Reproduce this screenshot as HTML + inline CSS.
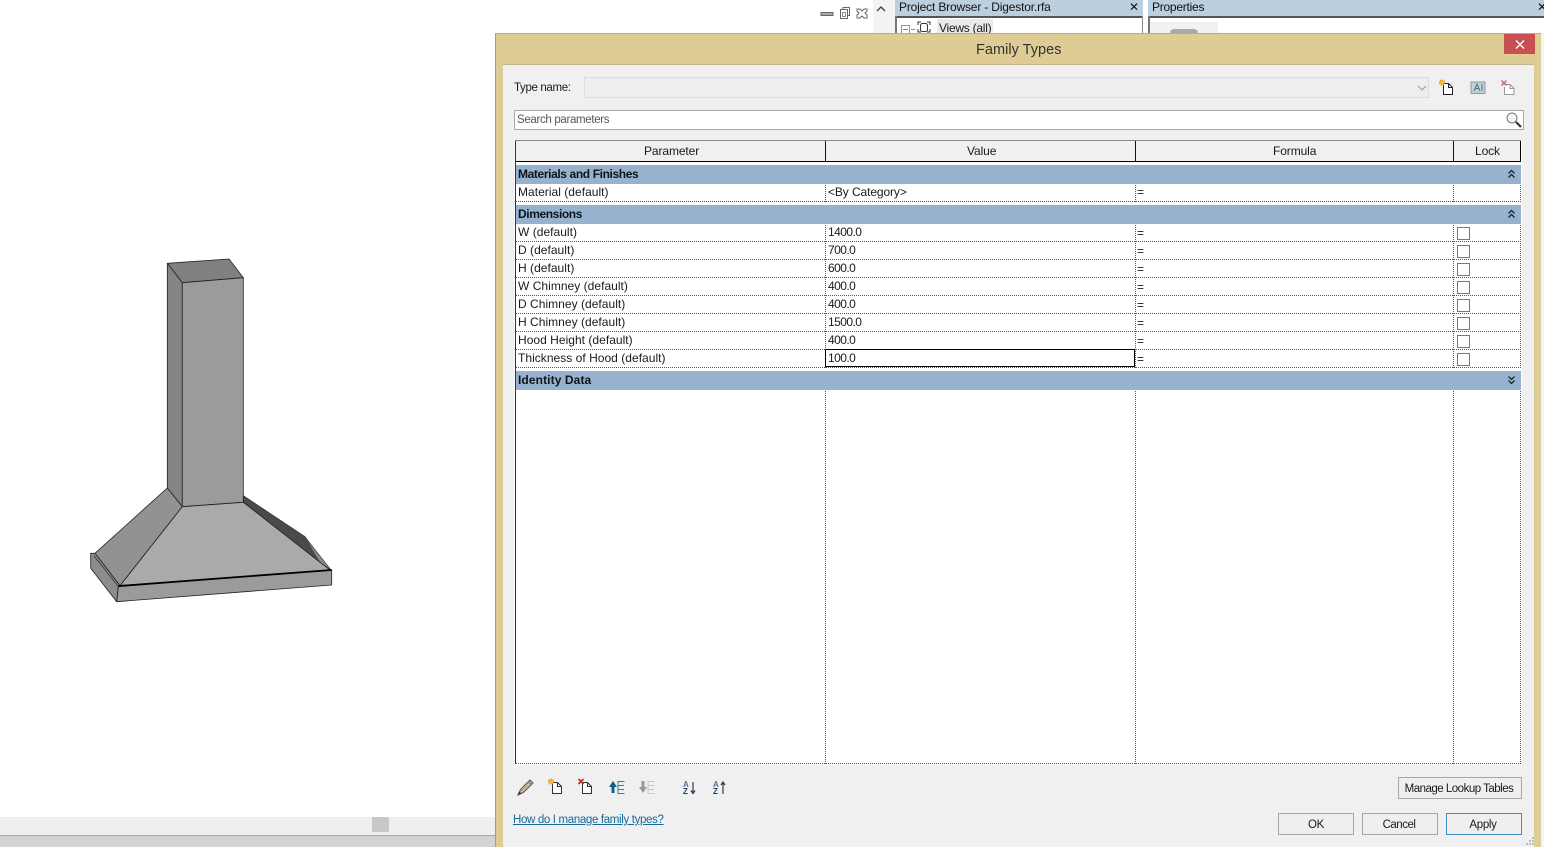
<!DOCTYPE html>
<html><head><meta charset="utf-8"><style>
html,body{margin:0;padding:0;background:#fff}
#p{position:relative;width:1544px;height:847px;overflow:hidden;background:#fff;font-family:"Liberation Sans",sans-serif;font-size:12px;color:#1a1a1a}
#p div{position:absolute}
.t{white-space:nowrap;line-height:16px;height:16px;letter-spacing:.03px}
.n{letter-spacing:-.55px}
.sec{left:516px;width:1005px;height:19px;background:#96b2cf}
.sec b{position:absolute;left:2px;top:1px;line-height:16px;font-size:12px;color:#10141a;white-space:nowrap}
.dh{left:516px;width:1005px;height:1px;background-image:repeating-linear-gradient(90deg,#555 0 1px,transparent 1px 2px)}
.dv{width:1px;background-image:repeating-linear-gradient(0deg,#555 0 1px,transparent 1px 2px)}
.cb{left:1457px;width:11px;height:11px;border:1px solid #777;background:#fff}
.btn{background:#efefef;border:1px solid #a8a8a8;text-align:center;line-height:22px;height:20px;font-size:11.5px;letter-spacing:-.3px;white-space:nowrap}
svg{position:absolute;overflow:visible}
</style></head><body><div id="p">

<svg style="left:0;top:0" width="495" height="847" stroke="#222" stroke-width=".8" stroke-linejoin="round">
<polygon points="243.3,495.7 243.3,502.3 330,570 305,536.7" fill="#4a4a4a" stroke="#333"/>
<polygon points="304,536 331,570 320,563" fill="#8c8c8c" stroke="#444"/>
<polygon points="167.3,263.3 229,259 243.3,277.7 182.3,282.7" fill="#808080"/>
<polygon points="167.3,263.3 182.3,282.7 182.3,506.7 167.3,488" fill="#858585"/>
<polygon points="182.3,282.7 243.3,277.7 243.3,502.3 182.3,506.7" fill="#9b9b9b"/>
<polygon points="167.3,488 182.3,506.7 120,585.7 95,553.3" fill="#929292"/>
<polygon points="182.3,506.7 243.3,502.3 330,570 120,585.7" fill="#aaa"/>
<polygon points="90.7,553.3 95,553.3 120,585.7 118.3,586.7 116.7,601.7 90.7,568.3" fill="#8c8c8c"/>
<line x1="94" y1="556" x2="118" y2="586" stroke="#333"/>
<polygon points="118.3,586.7 331.7,570 331.7,585 116.7,601.7" fill="#9b9b9b"/>
<line x1="118.3" y1="586" x2="331.7" y2="570" stroke="#000" stroke-width="1.8"/>
</svg>

<!-- bottom scrollbar -->
<div style="left:0;top:817px;width:495px;height:18px;background:#efefef"></div>
<div style="left:372px;top:817px;width:17px;height:15px;background:#c8c8c8"></div>
<div style="left:0;top:835px;width:495px;height:1px;background:#a6a6a6"></div>
<div style="left:0;top:836px;width:495px;height:11px;background:#d3d3d3"></div>

<!-- top-right chrome -->
<div style="left:873px;top:0;width:22px;height:33px;background:#f3f3f3"></div>
<svg style="left:820px;top:6px" width="70" height="14" fill="none" stroke="#666" stroke-width="1">
<rect x="1" y="6.5" width="12" height="3" fill="#aaa"/>
<rect x="20.5" y="3.5" width="7" height="9"/><path d="M23 3V1.5h6.5v8H28"/><rect x="22.5" y="6.500" width="3" height="4" stroke="#888"/>
<path d="M37 3l3 0 2 2 2-2 3 0 0 2-2 2 2 2 0 3-3 0-2-2-2 2-3 0 0-3 2-2-2-2z"/>
<path d="M57 5l4-4 4 4" stroke="#444" stroke-width="1.4"/>
</svg>
<div style="left:895px;top:0;width:248px;height:16px;background:#bccfdf"></div>
<div class="t" style="left:899px;top:-1px;letter-spacing:-.17px;color:#111">Project Browser - Digestor.rfa</div>
<div class="t" style="left:1129px;top:-1px;font-size:12px;color:#111;letter-spacing:0">✕</div>
<div style="left:895px;top:16px;width:248px;height:17px;background:#fff;border-top:2px solid #555;box-sizing:border-box"></div>
<div style="left:895px;top:16px;width:2px;height:17px;background:#777"></div>
<div style="left:1142px;top:16px;width:1px;height:17px;background:#888"></div>
<svg style="left:900px;top:20px" width="36" height="14" fill="none" stroke="#555" stroke-width="1">
<rect x="1.5" y="5.5" width="8" height="8" stroke="#999"/><path d="M3 9.5h5M11 9.5h4" stroke="#888"/>
<path d="M18 5V2h3M27 2h3v3M18 9v3h3M27 12h3V9" stroke="#333"/><rect x="20.5" y="3.5" width="7" height="8" rx="2" stroke="#333"/>
</svg>
<div style="left:937px;top:19px;width:56px;height:14px;background:#eaeaea"></div>
<div class="t" style="left:939px;top:20px;letter-spacing:-.25px">Views (all)</div>
<div style="left:1148px;top:0;width:396px;height:16px;background:#bccfdf"></div>
<div class="t" style="left:1152px;top:-1px;letter-spacing:-.25px;color:#111">Properties</div>
<div class="t" style="left:1537px;top:-1px;font-size:12px;color:#111;letter-spacing:0">✕</div>
<div style="left:1148px;top:16px;width:396px;height:17px;background:#fff;border-top:2px solid #555;box-sizing:border-box"></div>
<div style="left:1148px;top:16px;width:2px;height:17px;background:#777"></div>
<div style="left:1150px;top:22px;width:68px;height:11px;background:#f1f1f1"></div>
<div style="left:1170px;top:29px;width:28px;height:4px;background:#aaa;border-radius:14px 14px 0 0"></div>

<!-- dialog -->
<div style="left:495px;top:33px;width:1046px;height:814px;background:#dfcc95;border-top:1px solid #b8ab85;border-left:1px solid #a89c78;box-sizing:border-box"></div>
<div style="left:1541px;top:33px;width:3px;height:814px;background:#f4f4f4"></div>
<div style="left:503px;top:64px;width:1031px;height:783px;background:#f0f0f0;border-top:1px solid #bfb38d;box-sizing:border-box"></div>
<div style="left:1504px;top:34px;width:31px;height:20px;background:#c75050"></div>
<svg style="left:1515px;top:40px" width="10" height="9"><path d="M1 .5l8 8M9 .5l-8 8" stroke="#fff" stroke-width="1.4"/></svg>
<div class="t" style="left:976px;top:41px;font-size:14.5px;letter-spacing:.03px;color:#333;line-height:18px;height:18px">Family Types</div>

<div class="t" style="left:514px;top:80px;font-size:11.5px;letter-spacing:-.35px">Type name:</div>
<div style="left:584px;top:77px;width:845px;height:21px;background:#eee;border:1px solid #dcdcdc;box-sizing:border-box"></div>
<svg style="left:1417px;top:85px" width="10" height="6"><path d="M1 1l4 4 4-4" fill="none" stroke="#aaa" stroke-width="1.3"/></svg>

<!-- top icons -->
<svg style="left:1438px;top:79px" width="80" height="18" fill="none">
<path d="M5.500 4.500h5l4 4v7h-9z" fill="#fff" stroke="#222"/><path d="M10.500 4.500v4h4" stroke="#222"/>
<circle cx="4" cy="3.500" r="2.600" fill="#f6b73c" stroke="#e08a1e" stroke-dasharray="1 1"/>
<rect x="33" y="3" width="14" height="11.500" fill="#bcd3da" stroke="#8a9aa3"/><path d="M36 12l3-7 3 7M37 9.500h4M44 5v7" stroke="#55707c"/>
<path d="M68 5.500h4l4 4v6H66.500V8" fill="#fff" stroke="#999"/><path d="M72 5.500v4h4" stroke="#999"/>
<path d="M63.500 1.500l5 5M68.500 1.500l-5 5" stroke="#b8706c" stroke-width="1.500"/>
</svg>

<!-- search -->
<div style="left:514px;top:110px;width:1010px;height:20px;background:#fff;border:1px solid #a8a8a8;box-sizing:border-box"></div>
<div class="t" style="left:517px;top:112px;font-size:11.5px;letter-spacing:-.33px;color:#555">Search parameters</div>
<svg style="left:1505px;top:111px" width="18" height="18" fill="none"><circle cx="7" cy="7" r="5" fill="#f2f7fa" stroke="#777"/><path d="M11 11l5 5" stroke="#333" stroke-width="2.200"/></svg>

<!-- table -->
<div style="left:514px;top:140px;width:1008px;height:625px;background:#fff"></div>
<div style="left:515px;top:140px;width:1006px;height:1px;background:#888"></div>
<div style="left:516px;top:141px;width:1005px;height:20px;background:#f0f0f0"></div>
<div style="left:516px;top:161px;width:1005px;height:1px;background:#000"></div>
<div style="left:515px;top:141px;width:1px;height:623px;background:#333"></div>
<div style="left:1520px;top:141px;width:1px;height:21px;background:#000"></div>
<div style="left:825px;top:141px;width:1px;height:20px;background:#111"></div>
<div style="left:1135px;top:141px;width:1px;height:20px;background:#111"></div>
<div style="left:1453px;top:141px;width:1px;height:20px;background:#111"></div>
<div class="t" style="left:644px;top:143px;letter-spacing:-.1px">Parameter</div>
<div class="t" style="left:967px;top:143px;letter-spacing:-.1px">Value</div>
<div class="t" style="left:1273px;top:143px;letter-spacing:-.1px">Formula</div>
<div class="t" style="left:1475px;top:143px;letter-spacing:-.1px">Lock</div>

<div class="dv" style="left:825px;top:184px;height:580px"></div>
<div class="dv" style="left:1135px;top:184px;height:580px"></div>
<div class="dv" style="left:1453px;top:184px;height:580px"></div>
<div class="dv" style="left:1520px;top:184px;height:580px"></div>

<div style="left:516px;top:202px;width:1005px;height:3px;background:#fff"></div>
<div style="left:516px;top:368px;width:1005px;height:3px;background:#fff"></div>

<div class="sec" style="top:165px"><b style="letter-spacing:-.38px">Materials and Finishes</b></div>
<div class="sec" style="top:205px"><b style="letter-spacing:-.4px">Dimensions</b></div>
<div class="sec" style="top:371px"><b style="letter-spacing:.1px">Identity Data</b></div>
<svg style="left:1507px;top:169px" width="9" height="10" fill="none" stroke="#111" stroke-width="1.200"><path d="M1.500 4.500l3-3 3 3M1.500 8.500l3-3 3 3"/></svg>
<svg style="left:1507px;top:209px" width="9" height="10" fill="none" stroke="#111" stroke-width="1.200"><path d="M1.500 4.500l3-3 3 3M1.500 8.500l3-3 3 3"/></svg>
<svg style="left:1507px;top:375px" width="9" height="10" fill="none" stroke="#111" stroke-width="1.200"><path d="M1.500 1.500l3 3 3-3M1.500 5.500l3 3 3-3"/></svg>

<div class="dh" style="top:201px"></div>
<div class="dh" style="top:241px"></div>
<div class="dh" style="top:259px"></div>
<div class="dh" style="top:277px"></div>
<div class="dh" style="top:295px"></div>
<div class="dh" style="top:313px"></div>
<div class="dh" style="top:331px"></div>
<div class="dh" style="top:349px"></div>
<div class="dh" style="top:367px"></div>
<div class="dh" style="top:763px"></div>

<div class="t" style="left:518px;top:184px">Material (default)</div>
<div class="t" style="left:828px;top:184px;letter-spacing:-.1px">&lt;By Category&gt;</div>
<div class="t" style="left:1137px;top:184px">=</div>

<div class="t" style="left:518px;top:224px">W (default)</div><div class="t n" style="left:828px;top:224px">1400.0</div><div class="t" style="left:1137px;top:225px">=</div><div class="cb" style="top:227px"></div>
<div class="t" style="left:518px;top:242px">D (default)</div><div class="t n" style="left:828px;top:242px">700.0</div><div class="t" style="left:1137px;top:243px">=</div><div class="cb" style="top:245px"></div>
<div class="t" style="left:518px;top:260px">H (default)</div><div class="t n" style="left:828px;top:260px">600.0</div><div class="t" style="left:1137px;top:261px">=</div><div class="cb" style="top:263px"></div>
<div class="t" style="left:518px;top:278px">W Chimney (default)</div><div class="t n" style="left:828px;top:278px">400.0</div><div class="t" style="left:1137px;top:279px">=</div><div class="cb" style="top:281px"></div>
<div class="t" style="left:518px;top:296px">D Chimney (default)</div><div class="t n" style="left:828px;top:296px">400.0</div><div class="t" style="left:1137px;top:297px">=</div><div class="cb" style="top:299px"></div>
<div class="t" style="left:518px;top:314px">H Chimney (default)</div><div class="t n" style="left:828px;top:314px">1500.0</div><div class="t" style="left:1137px;top:315px">=</div><div class="cb" style="top:317px"></div>
<div class="t" style="left:518px;top:332px">Hood Height (default)</div><div class="t n" style="left:828px;top:332px">400.0</div><div class="t" style="left:1137px;top:333px">=</div><div class="cb" style="top:335px"></div>
<div class="t" style="left:518px;top:350px">Thickness of Hood (default)</div>
<div style="left:825px;top:349px;width:310px;height:18px;border:1px solid #000;box-sizing:border-box;background:#fff"></div>
<div class="t n" style="left:828px;top:350px">100.0</div><div class="t" style="left:1137px;top:351px">=</div><div class="cb" style="top:353px"></div>

<!-- bottom toolbar -->
<svg style="left:515px;top:778px" width="225" height="20" fill="none">
<path d="M3 17l2.500-5.500L15 2l3 3L8.500 14.500z" fill="#c9b58f" stroke="#555"/><path d="M3 17l1-3.500 2.500 2z" fill="#333"/><path d="M13.500 3.500l3 3" stroke="#777"/>
<path d="M37.500 4.500h5l4 4v7h-9z" fill="#fff" stroke="#333"/><path d="M42.500 4.500v4h4" stroke="#333"/>
<circle cx="36" cy="3.500" r="2.600" fill="#f6b73c" stroke="#e08a1e" stroke-dasharray="1 1"/>
<path d="M67.500 4.500h5l4 4v7h-9z" fill="#fff" stroke="#333"/><path d="M72.500 4.500v4h4" stroke="#333"/>
<path d="M63.500 1l5 5M68.500 1l-5 5" stroke="#c0302b" stroke-width="1.800"/>
<path d="M98 15V8" stroke="#0f5f87" stroke-width="3"/><path d="M94 9l4-6 4 6z" fill="#0f5f87"/>
<path d="M109.500 3.500h-6.500v12h6.500M103 7.500h6M103 11.500h6" stroke="#2f7fa8"/>
<path d="M128 3v7" stroke="#999" stroke-width="3"/><path d="M124 9l4 6 4-6z" fill="#999"/>
<path d="M139.500 3.500h-6.500v12h6.500M133 7.500h6M133 11.500h6" stroke="#b9cdd8"/>
<path d="M178 4v11M176 12.500l2 3 2-3" stroke="#2a3f55" stroke-width="1.200"/>
<path d="M208 5v11M206 7l2-3 2 3" stroke="#2a3f55" stroke-width="1.200"/>
<text x="168" y="9" font-size="8" font-weight="bold" fill="#53708e" font-family="Liberation Sans">A</text>
<text x="168" y="16" font-size="8" font-weight="bold" fill="#2a3f55" font-family="Liberation Sans">Z</text>
<text x="198" y="9" font-size="8" font-weight="bold" fill="#53708e" font-family="Liberation Sans">A</text>
<text x="198" y="16" font-size="8" font-weight="bold" fill="#2a3f55" font-family="Liberation Sans">Z</text>
</svg>

<div class="t" style="left:513px;top:812px;color:#15699b;text-decoration:underline;font-size:11.5px;letter-spacing:-.34px">How do I manage family types?</div>

<div class="btn" style="left:1398px;top:777px;width:122px;letter-spacing:-.5px"><span style="position:relative;left:-1px">Manage Lookup Tables</span></div>
<div class="btn" style="left:1278px;top:813px;width:74px">OK</div>
<div class="btn" style="left:1362px;top:813px;width:74px;letter-spacing:-.5px"><span style="position:relative;left:-1px">Cancel</span></div>
<div class="btn" style="left:1446px;top:813px;width:74px;border-color:#3f8fbf"><span style="position:relative;left:-1px">Apply</span></div>
<svg style="left:1524px;top:835px" width="12" height="12" fill="#bbb"><rect x="8" y="2" width="2" height="2"/><rect x="5" y="5" width="2" height="2"/><rect x="8" y="5" width="2" height="2"/><rect x="2" y="8" width="2" height="2"/><rect x="5" y="8" width="2" height="2"/><rect x="8" y="8" width="2" height="2"/></svg>

</div></body></html>
